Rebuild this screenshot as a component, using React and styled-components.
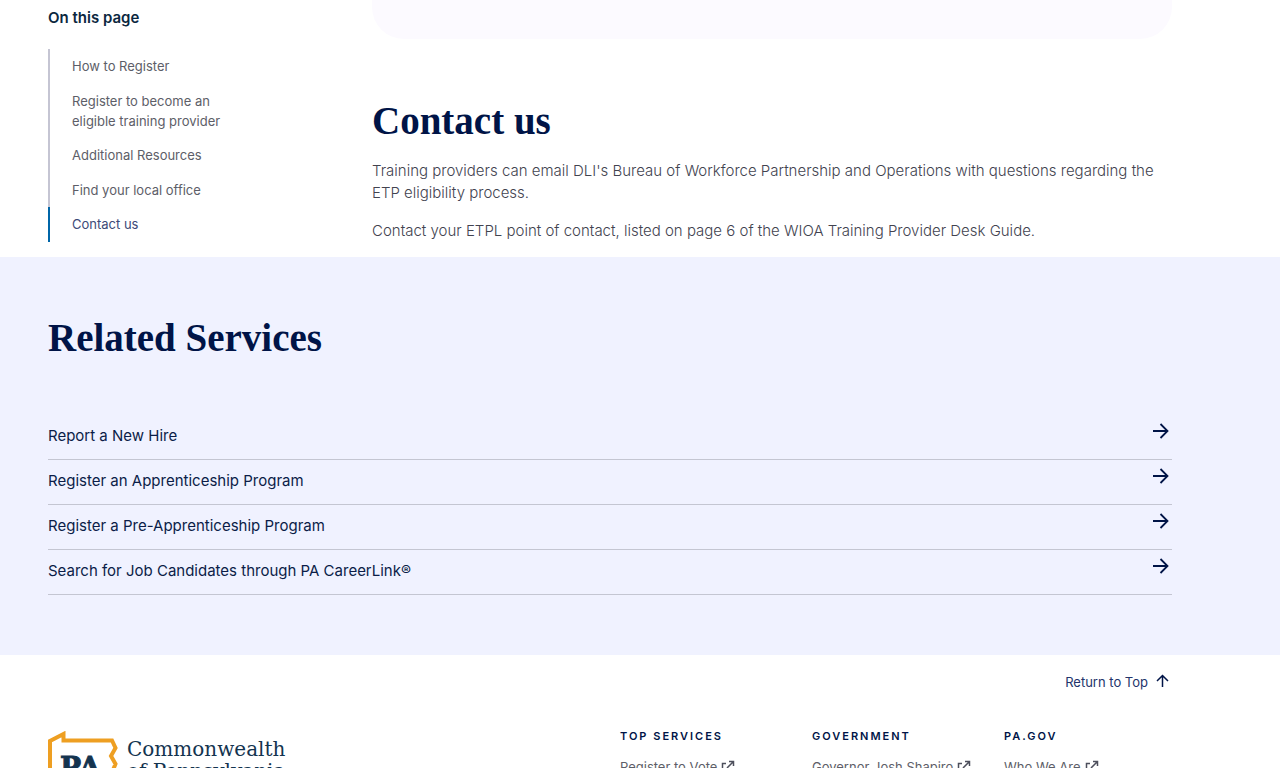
import React from "react";
import styled, { createGlobalStyle } from "styled-components";

const sans = `Inter, "Open Sans", "Liberation Sans", sans-serif`;
const headingSerif = `"Liberation Serif", "DejaVu Serif", serif`;
const logoSerif = `"DejaVu Serif", "Liberation Serif", serif`;
const navy = "#001447";

const GlobalStyle = createGlobalStyle`
  * { box-sizing: border-box; }
  html, body, #root { height: 100%; }
  body { margin: 0; overflow: hidden; background: #fff; color: #42434f; font-family: ${sans}; }
  a { color: inherit; text-decoration: none; }
  h2, h3, p, ul { margin: 0; padding: 0; }
  ul { list-style: none; }
`;

const Page = styled.div`
  height: 100%;
  overflow: hidden;
`;

const Container = styled.div`
  padding: 0 108px 0 48px;
`;

const Columns = styled(Container)`
  display: grid;
  grid-template-columns: 200px minmax(0, 1fr);
  column-gap: 124px;
`;

const Sidebar = styled.nav`
  display: flex;
  flex-direction: column;
  padding: 6px 0 15px;
`;

const SidebarTitle = styled.h2`
  margin-bottom: 19px;
  font-size: 15px;
  line-height: 24px;
  font-weight: 600;
  color: #0b2740;
`;

const SidebarList = styled.ul`
  flex: 1;
  display: flex;
  flex-direction: column;
`;

const SidebarItem = styled.li`
  flex: 1 0 auto;
  padding: 7px 0 7px 22px;
  border-left: 2px solid ${(p) => (p.$active ? "#0066a8" : "#c5c5d3")};
  color: ${(p) => (p.$active ? "#3c4a78" : "#5d5e68")};
  font-size: 13px;
  line-height: 20px;

  a { display: block; }
`;

const Article = styled.main`
  padding-bottom: 15px;
`;

const Panel = styled.div`
  height: 39px;
  margin-bottom: 60px;
  border-radius: 0 0 32px 32px;
  background: #fcfaff;
`;

const Heading = styled.h2`
  margin-bottom: ${(p) => p.$gap}px;
  font-family: ${headingSerif};
  font-size: 39px;
  line-height: 44px;
  font-weight: 700;
  color: ${navy};
`;

const Paragraph = styled.p`
  font-size: 15px;
  line-height: 22px;
  font-weight: 300;

  & + & { margin-top: 16px; }
`;

const Related = styled.section`
  padding: 59px 0 60px;
  background: #f0f2ff;
`;

const ServiceLink = styled.a`
  display: flex;
  justify-content: space-between;
  align-items: flex-start;
  padding: 4px 0;
  border-bottom: 1px solid #c4c6d2;
  font-size: 15px;
  line-height: 24px;
  color: #0b1d48;

  span { padding: 5px 0 7px; }
`;

const Footer = styled.footer`
  padding-top: 15px;
`;

const ReturnRow = styled.div`
  display: flex;
  justify-content: flex-end;
  margin-bottom: 32px;
`;

const ReturnLink = styled.a`
  display: flex;
  align-items: center;
  gap: 4px;
  font-size: 13px;
  line-height: 24px;
  color: #23346b;
`;

const FooterGrid = styled.div`
  display: grid;
  grid-template-columns: minmax(0, 1fr) repeat(3, 168px);
  column-gap: 24px;
`;

const Brand = styled.a`
  display: flex;
  gap: 8px;
  padding-top: 5px;
  color: #14344f;
`;

const BrandName = styled.span`
  display: flex;
  flex-direction: column;
  padding-top: 7px;
  font-family: ${logoSerif};
  font-size: 20px;
  line-height: 22px;
  white-space: nowrap;
`;

const FooterTitle = styled.h3`
  margin-bottom: 11px;
  font-size: 11px;
  line-height: 20px;
  font-weight: 600;
  letter-spacing: 2px;
  text-transform: uppercase;
  color: ${navy};
`;

const FooterLink = styled.a`
  display: flex;
  align-items: center;
  gap: 4px;
  font-size: 13px;
  line-height: 20px;
  color: #5d5e68;
  white-space: nowrap;
`;

const ArrowRight = () => (
  <svg width="24" height="24" viewBox="0 0 24 24" fill="none" stroke={navy} strokeWidth="1.8" aria-hidden="true">
    <path d="M5 12H19M12.500 5l7 7-7 7" />
  </svg>
);

const ArrowUp = () => (
  <svg width="20" height="20" viewBox="0 0 20 20" fill="none" stroke={navy} strokeWidth="1.5" aria-hidden="true">
    <path d="M10.500 15V3.500M5 9L10.500 3.500L16 9" />
  </svg>
);

const External = () => (
  <svg width="14" height="14" viewBox="0 0 14 14" fill="none" stroke="#4d4f5c" strokeWidth="1.500" aria-hidden="true">
    <path d="M5 3.500H1.500V13H11.500V9M8 1.500h4.500v4.500M12.500 1.500L6 8" />
  </svg>
);

const StateLogo = () => (
  <svg width="71" height="60" viewBox="0 0 71 60" aria-hidden="true">
    <path
      d="M2 54V10L15.500 3v6.500H64L67.500 17l-4.500 8L67.500 33l-5 12v9z"
      fill="none"
      stroke="#ee9f22"
      strokeWidth="4"
    />
    <text
      x="12"
      y="46"
      fontFamily="DejaVu Serif, serif"
      fontWeight="700"
      fontSize="28"
      fill="#14344f"
      stroke="#14344f"
      strokeWidth="1"
    >
      PA
    </text>
  </svg>
);

const sections = [
  "How to Register",
  "Register to become an eligible training provider",
  "Additional Resources",
  "Find your local office",
  "Contact us",
];

const services = [
  "Report a New Hire",
  "Register an Apprenticeship Program",
  "Register a Pre-Apprenticeship Program",
  "Search for Job Candidates through PA CareerLink®",
];

const footerColumns = [
  { title: "Top Services", link: "Register to Vote" },
  { title: "Government", link: "Governor Josh Shapiro" },
  { title: "PA.GOV", link: "Who We Are" },
];

export default function App() {
  return (
    <Page>
      <GlobalStyle />
      <Columns>
        <Sidebar aria-label="On this page">
          <SidebarTitle>On this page</SidebarTitle>
          <SidebarList>
            {sections.map((label) => (
              <SidebarItem key={label} $active={label === "Contact us"}>
                <a href="#contact">{label}</a>
              </SidebarItem>
            ))}
          </SidebarList>
        </Sidebar>
        <Article>
          <Panel />
          <Heading id="contact" $gap={17}>Contact us</Heading>
          <Paragraph>
            Training providers can email DLI's Bureau of Workforce Partnership and Operations with
            questions regarding the ETP eligibility process.
          </Paragraph>
          <Paragraph>
            Contact your ETPL point of contact, listed on page 6 of the WIOA Training Provider Desk
            Guide.
          </Paragraph>
        </Article>
      </Columns>
      <Related>
        <Container>
          <Heading $gap={55}>Related Services</Heading>
          <ul>
            {services.map((label) => (
              <li key={label}>
                <ServiceLink href="#service">
                  <span>{label}</span>
                  <ArrowRight />
                </ServiceLink>
              </li>
            ))}
          </ul>
        </Container>
      </Related>
      <Footer>
        <Container>
          <ReturnRow>
            <ReturnLink href="#top">
              Return to Top
              <ArrowUp />
            </ReturnLink>
          </ReturnRow>
          <FooterGrid>
            <Brand href="#home">
              <StateLogo />
              <BrandName>
                <span>Commonwealth</span>
                <span>of Pennsylvania</span>
              </BrandName>
            </Brand>
            {footerColumns.map((column) => (
              <div key={column.title}>
                <FooterTitle>{column.title}</FooterTitle>
                <FooterLink href="#link">
                  {column.link}
                  <External />
                </FooterLink>
              </div>
            ))}
          </FooterGrid>
        </Container>
      </Footer>
    </Page>
  );
}
